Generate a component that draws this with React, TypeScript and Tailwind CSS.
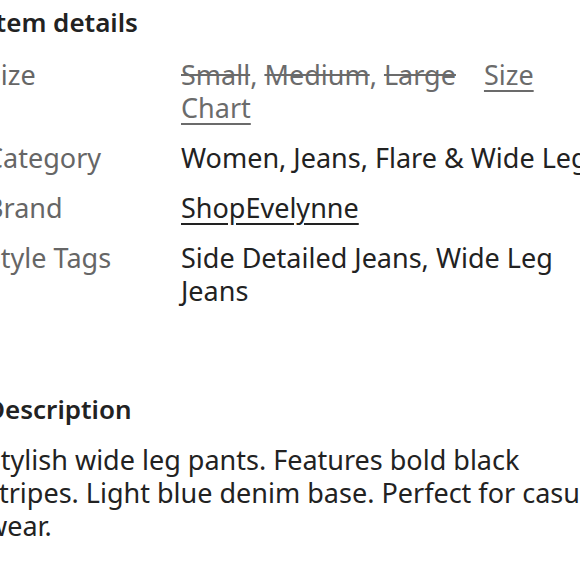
import React from 'react';

interface DetailRow {
  label: string;
  value: React.ReactNode;
}

export default function App() {
  const rows: DetailRow[] = [
    {
      label: 'Size',
      value: (
        <>
          <span className="text-[#6b6b6b]">
            <span className="line-through">Small</span>, <span className="line-through">Medium</span>,{' '}
            <span className="line-through">Large</span>
          </span>
          <span className="ml-[28px] text-[#6b6b6b] underline underline-offset-[5px]">Size Chart</span>
        </>
      ),
    },
    { label: 'Category', value: 'Women, Jeans, Flare & Wide Leg' },
    {
      label: 'Brand',
      value: <span className="underline underline-offset-[5px]">ShopEvelynne</span>,
    },
    { label: 'Style Tags', value: 'Side Detailed Jeans, Wide Leg Jeans' },
  ];

  return (
    <div
      className="w-[580px] h-[580px] overflow-hidden bg-white text-[#222]"
      style={{ fontFamily: '"Noto Sans", sans-serif' }}
    >
      <div className="ml-[-14px] w-[621px] pt-[4px]">
        <h2 className="text-[26px] leading-[36px] font-semibold">Item details</h2>
        <div className="mt-[18px] flex flex-col gap-[17px]">
          {rows.map((row) => (
            <div key={row.label} className="grid grid-cols-[195px_1fr] text-[27px] leading-[33px]">
              <div className="text-[#666]">{row.label}</div>
              <div>{row.value}</div>
            </div>
          ))}
        </div>
        <h2 className="mt-[84px] text-[26px] leading-[36px] font-semibold">Description</h2>
        <p className="mt-[16px] text-[27px] leading-[33px]">
          Stylish wide leg pants. Features bold black stripes. Light blue denim base. Perfect for casual wear.
        </p>
      </div>
    </div>
  );
}
